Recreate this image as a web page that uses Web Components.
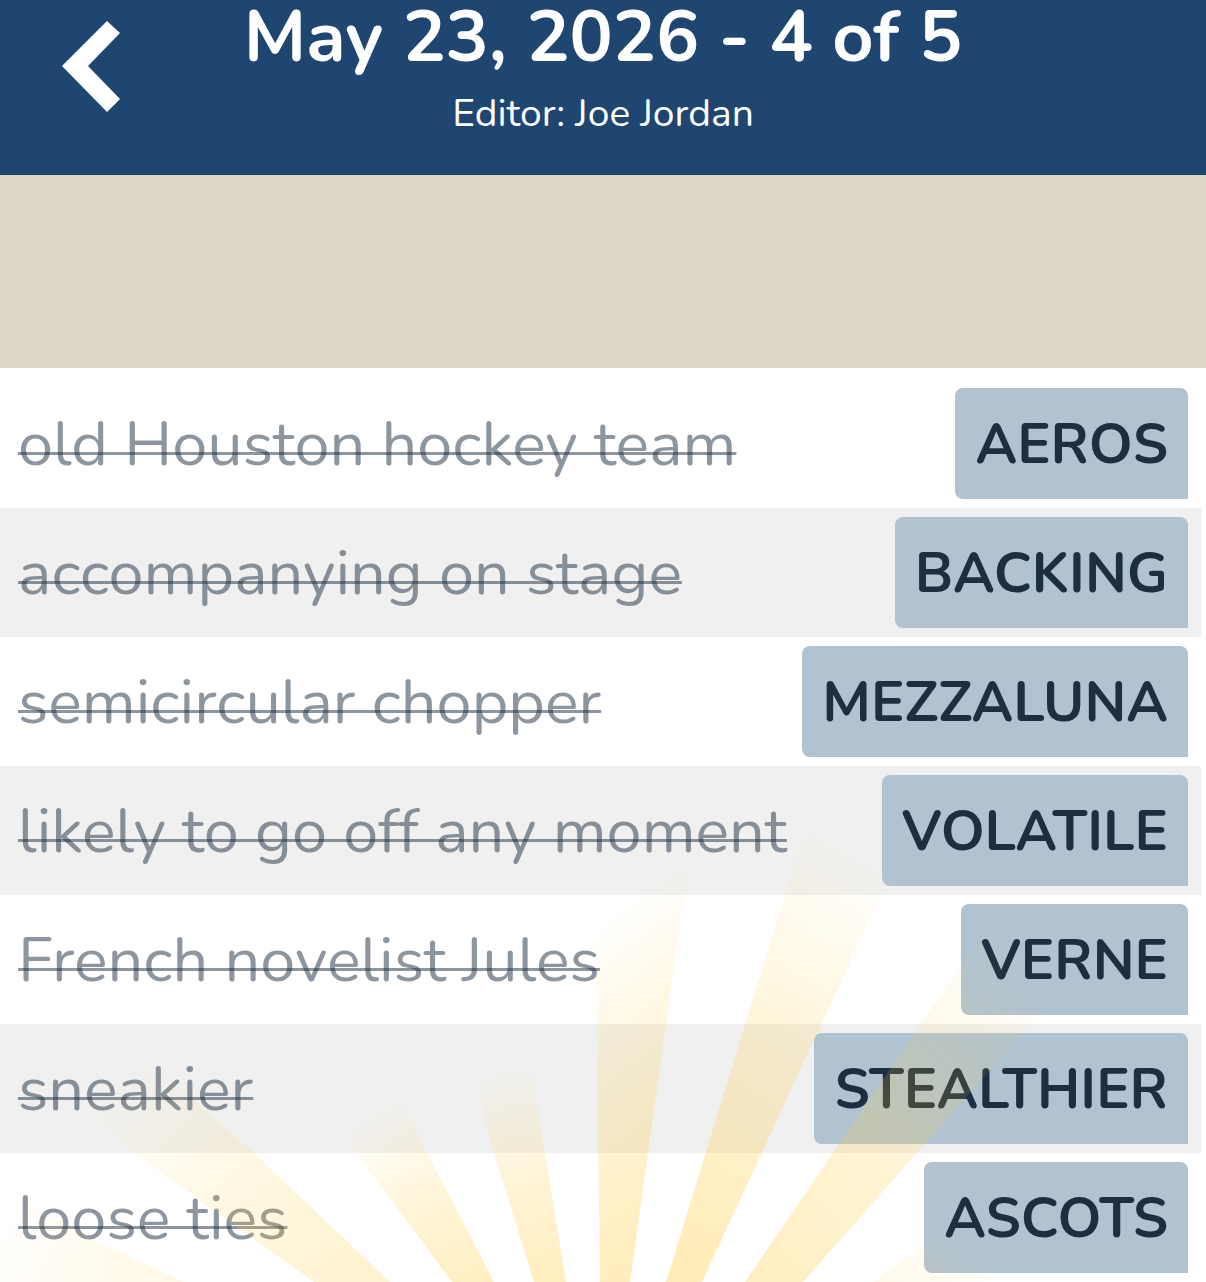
<!DOCTYPE html>
<html lang="en">
<head>
<meta charset="utf-8">
<meta name="viewport" content="width=device-width, initial-scale=1">
<title>May 23, 2026 - 4 of 5</title>
<style>
    body {
        margin: 0;
        background: #fff;
        color: #1c2e40;
        font-family: Nunito, Lato, sans-serif;
        overflow-x: hidden;
    }
</style>
</head>
<body>
<puzzle-page></puzzle-page>

<script>
const clues = [
    {clue: 'old Houston hockey team', answer: 'AEROS'},
    {clue: 'accompanying on stage', answer: 'BACKING'},
    {clue: 'semicircular chopper', answer: 'MEZZALUNA'},
    {clue: 'likely to go off any moment', answer: 'VOLATILE'},
    {clue: 'French novelist Jules', answer: 'VERNE'},
    {clue: 'sneakier', answer: 'STEALTHIER'},
    {clue: 'loose ties', answer: 'ASCOTS'}
];

class PuzzleHeader extends HTMLElement {
    constructor() {
        super();
        this.attachShadow({mode: 'open'});
    }
    connectedCallback() {
        this.shadowRoot.innerHTML = `
        <style>
            :host {
                display: block;
                background: #1f4670;
                color: #fff;
            }
            header {
                display: grid;
                grid-template-columns: 1fr auto 1fr;
                padding-bottom: 20px;
                text-align: center;
            }
            button {
                justify-self: start;
                align-self: start;
                margin: 0 0 0 50px;
                padding: 20px 12px;
                border: 0;
                background: none;
                color: inherit;
                cursor: pointer;
            }
            svg {
                display: block;
            }
            div {
                padding-top: 1px;
            }
        </style>
        <header>
            <button type="button" aria-label="Back">
                <svg width="60" height="92" viewBox="0 0 60 92" fill="currentColor">
                    <path d="M45 1 L58 13 L26 46 L58 79 L45 92 L0 46 Z"/>
                </svg>
            </button>
            <div><slot></slot></div>
        </header>
        `;
    }
}
customElements.define('puzzle-header', PuzzleHeader);

class ClueRow extends HTMLElement {
    constructor() {
        super();
        this.attachShadow({mode: 'open'});
    }
    connectedCallback() {
        this.shadowRoot.innerHTML = `
        <style>
            :host {
                display: flex;
                justify-content: space-between;
                align-items: center;
                gap: 20px;
                padding: 9px 13px 9px 18px;
                background: var(--row-color, transparent);
            }
            s {
                color: rgba(28, 46, 64, 0.5);
                font-size: 63px;
                line-height: 72px;
                /* an underline pulled up, so that the line sits low on the letters */
                text-decoration: underline 3px;
                text-underline-offset: -13px;
                text-decoration-skip-ink: none;
            }
            strong {
                padding: 2px 20px 0;
                border-radius: 8px 8px 0 8px;
                background: #b1c3d1;
                font-size: 56px;
                font-weight: 700;
                line-height: 109px;
            }
        </style>
        <s><slot name="clue"></slot></s>
        <strong><slot name="answer"></slot></strong>
        `;
    }
}
customElements.define('clue-row', ClueRow);

// Rays that shine over the rows: outline, and the line along which the light fades out
const rays = [
    {points: '-40,800 96,873 184,914 -40,914', from: [184, 914], to: [10, 830], glow: 0.14},
    {points: '0,675 90,640 254,785 390,914 314,914 134,785', from: [352, 914], to: [134, 696], glow: 0.24},
    {points: '310,680 388,700 427,785 494,914 452,914 356,785', from: [473, 914], to: [376, 740], glow: 0.32},
    {points: '470,690 530,690 545,785 566,914 534,914 494,785', from: [550, 914], to: [502, 700], glow: 0.34},
    {points: '590,440 694,440 684,527 630,914 600,914 595,527', from: [630, 914], to: [445, 668], glow: 0.36},
    {points: '815,430 900,470 881,527 702,914 666,914 785,527', from: [684, 914], to: [915, 512], glow: 0.38},
    {points: '1000,540 1110,570 1030,657 803,914 745,914 951,612', from: [774, 914], to: [1072, 652], glow: 0.32},
    {points: '1096,745 1206,745 980,914 873,914', from: [890, 914], to: [960, 858], glow: 0.1}
];

class SunRays extends HTMLElement {
    constructor() {
        super();
        this.attachShadow({mode: 'open'});
    }
    connectedCallback() {
        this.shadowRoot.innerHTML = `
        <style>
            :host {
                position: absolute;
                inset: 0;
                overflow: hidden;
                pointer-events: none;
            }
            svg {
                display: block;
                width: 100%;
                height: 100%;
            }
        </style>
        <svg viewBox="0 0 1206 914" preserveAspectRatio="xMidYMin slice" aria-hidden="true">
            ${rays.map(({points, from, to, glow}, i) => `
            <linearGradient id="ray-${i}" gradientUnits="userSpaceOnUse" x1="${from[0]}" y1="${from[1]}" x2="${to[0]}" y2="${to[1]}">
                <stop offset="0" stop-color="#ffcc40" stop-opacity="${glow}"/>
                <stop offset="0.5" stop-color="#ffcc40" stop-opacity="${glow * 0.6}"/>
                <stop offset="1" stop-color="#ffcc40" stop-opacity="0"/>
            </linearGradient>
            <polygon points="${points}" fill="url(#ray-${i})"/>`).join('')}
        </svg>
        `;
    }
}
customElements.define('sun-rays', SunRays);

class ClueList extends HTMLElement {
    constructor() {
        super();
        this.attachShadow({mode: 'open'});
    }
    connectedCallback() {
        this.shadowRoot.innerHTML = `
        <style>
            :host {
                display: block;
                position: relative;
            }
            div {
                padding: 11px 5px 0 0;
            }
            ::slotted(clue-row:nth-child(even)) {
                --row-color: #f0f0f0;
            }
        </style>
        <div><slot></slot></div>
        <sun-rays></sun-rays>
        `;
    }
}
customElements.define('clue-list', ClueList);

class PuzzlePage extends HTMLElement {
    constructor() {
        super();
        this.attachShadow({mode: 'open'});
    }
    connectedCallback() {
        this.shadowRoot.innerHTML = `
        <style>
            :host {
                display: block;
            }
            h1 {
                margin: 0;
                font-size: 72px;
                font-weight: 700;
                line-height: 72px;
            }
            p {
                margin: 0;
                font-size: 39px;
                line-height: 82px;
            }
            .banner {
                height: 193px;
                background: #ded7ca;
            }
        </style>
        <puzzle-header>
            <h1>May 23, 2026 - 4 of 5</h1>
            <p>Editor: Joe Jordan</p>
        </puzzle-header>
        <div class="banner"></div>
        <clue-list>
            ${clues.map(item => `
            <clue-row>
                <span slot="clue">${item.clue}</span>
                <span slot="answer">${item.answer}</span>
            </clue-row>`).join('')}
        </clue-list>
        `;
    }
}
customElements.define('puzzle-page', PuzzlePage);
</script>
</body>
</html>
